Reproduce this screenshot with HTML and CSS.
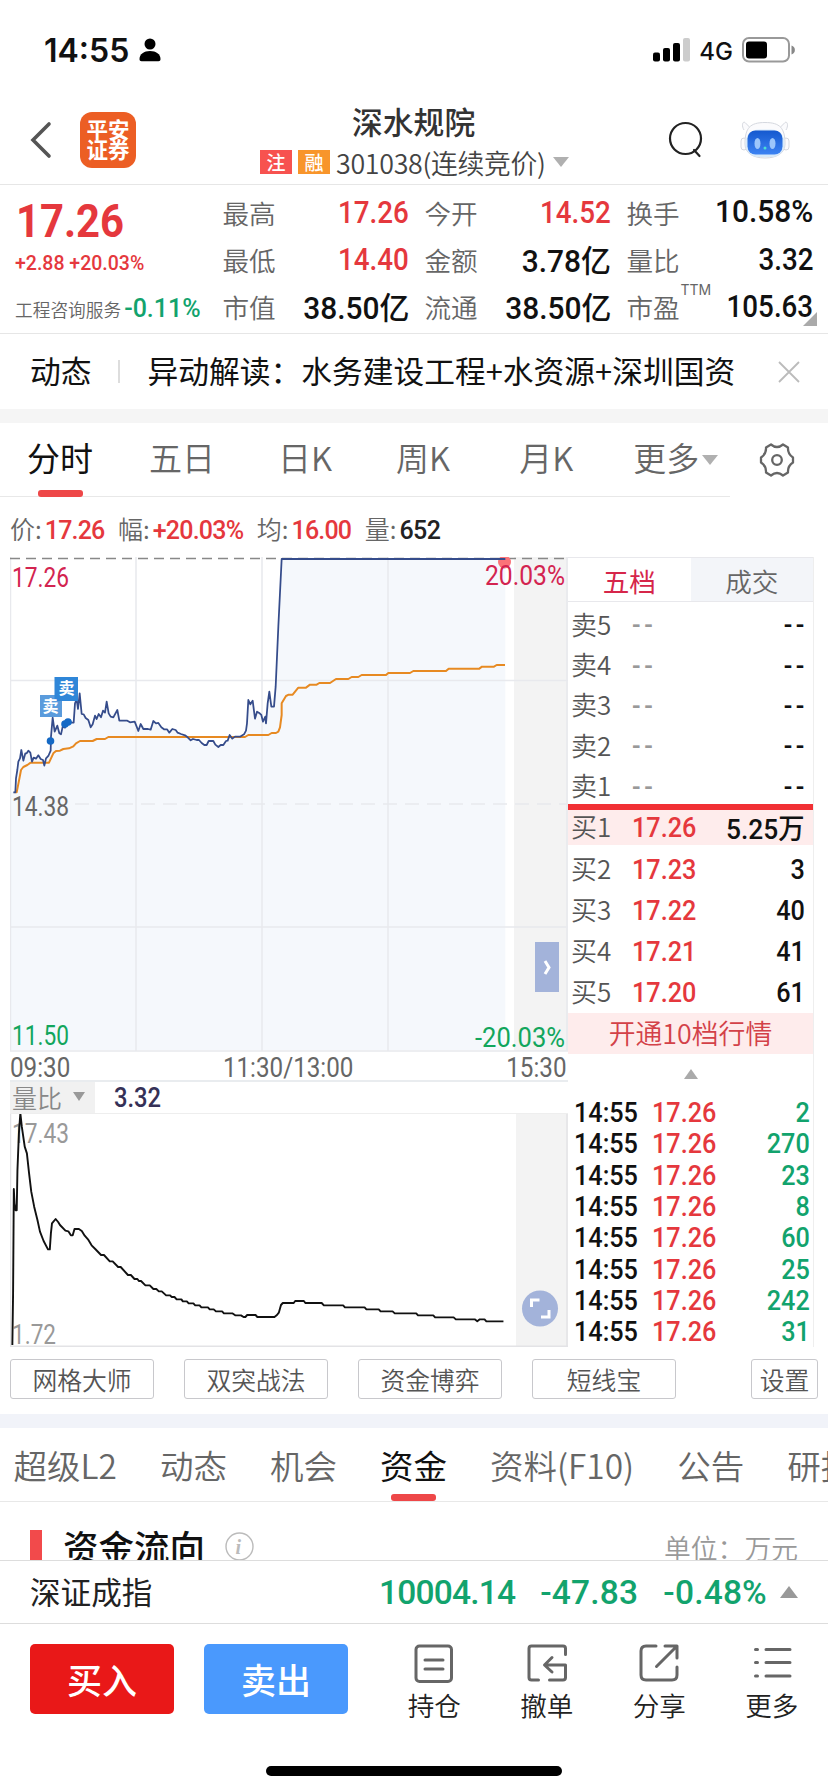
FILE: index.html
```html
<!DOCTYPE html>
<html lang="zh-CN">
<head>
<meta charset="utf-8">
<title>深水规院 301038</title>
<link rel="stylesheet" href="styles.css">
</head>
<body>
<div class="status">
  <span class="clock">14:55</span>
  <svg class="person" width="22" height="24" viewBox="0 0 22 24"><circle cx="11" cy="6" r="5.5"/><path d="M.5 21C.5 16 5 13 11 13s10.500 3 10.500 8c0 1.500-.8 2.200-2 2.200h-17c-1.200 0-2-.7-2-2.200z"/></svg>
  <svg class="signal" width="37" height="24" viewBox="0 0 37 24"><rect y="14.500" width="7" height="9" rx="2"/><rect x="10" y="10" width="7" height="13.500" rx="2"/><rect x="20" y="5" width="7" height="18.500" rx="2"/><rect x="30" width="7" height="23.500" rx="2" fill="#ccc"/></svg>
  <span class="net">4G</span>
  <svg class="battery" width="54" height="26" viewBox="0 0 54 26"><rect x="1" y="1" width="46" height="23.500" rx="6" fill="none" stroke="#999" stroke-width="2"/><rect x="4" y="4.500" width="21" height="17" rx="3"/><path d="M49.500 8.500c4.500 1.500 4.500 7.500 0 9z" fill="#888"/></svg>
</div>

<header class="header">
  <svg class="back" width="22" height="38" viewBox="0 0 22 38"><path d="M19 3 3 19l16 16" fill="none" stroke="#555" stroke-width="3.600" stroke-linecap="round"/></svg>
  <div class="logo"><span>平安</span><span>证券</span></div>
  <div class="title">
    <h1>深水规院</h1>
    <div class="code"><b class="tag red-tag">注</b><b class="tag orange-tag">融</b><span class="code-text">301038(连续竞价)</span><i class="tri-down"></i></div>
  </div>
  <svg class="search" width="36" height="38" viewBox="0 0 36 38"><g fill="none" stroke="#222" stroke-width="2.200" stroke-linecap="round"><circle cx="17.500" cy="17.500" r="15.500"/><path d="m26 29 5.500 6"/></g></svg>
  <svg class="robot" width="50" height="40" viewBox="0 0 50 40">
    <defs><linearGradient id="face" x2="0" y2="1"><stop stop-color="#1559cf"/><stop offset="1" stop-color="#3d83f2"/></linearGradient></defs>
    <g fill="#fbfbfd" stroke="#d5d8df"><path d="M4 10C1 5 3 1 5 2.500l5 5M46 10c3-5 1-9-1-7.500l-5 5"/><rect x="1" y="18" width="6" height="12" rx="3"/><rect x="43" y="18" width="6" height="12" rx="3"/><path d="M5 24C5 8 10 2.500 25 2.500S45 8 45 24c0 9-8 14-20 14S5 33 5 24z"/></g>
    <rect x="5.500" y="9.500" width="39" height="27.500" rx="13" fill="#d8eafa"/><rect x="7.500" y="10.500" width="35" height="24" rx="8" fill="url(#face)"/>
    <g fill="#9cc6fb"><ellipse cx="17.500" cy="23.500" rx="3" ry="5.500"/><ellipse cx="32.500" cy="23.500" rx="3" ry="5.500"/><circle cx="25" cy="28" r="1.500" fill="#4be0d0"/></g>
  </svg>
</header>

<section class="quote">
  <div class="last">
    <span class="num price">17.26</span>
    <span class="num change">+2.88 +20.03%</span>
    <span class="sector">工程咨询服务<b class="num">-0.11%</b></span>
  </div>
  <dl class="stats">
    <div><dt>最高</dt><dd class="num up">17.26</dd></div>
    <div><dt>今开</dt><dd class="num up">14.52</dd></div>
    <div><dt>换手</dt><dd class="num wide">10.58%</dd></div>
    <div><dt>最低</dt><dd class="num up">14.40</dd></div>
    <div><dt>金额</dt><dd class="num wide">3.78亿</dd></div>
    <div><dt>量比</dt><dd class="num">3.32</dd></div>
    <div><dt>市值</dt><dd class="num wide">38.50亿</dd></div>
    <div><dt>流通</dt><dd class="num wide">38.50亿</dd></div>
    <div><dt>市盈<sup>TTM</sup></dt><dd class="num">105.63</dd></div>
  </dl>
  <i class="corner"></i>
</section>

<section class="news">
  <span>动态</span><i class="bar"></i><span class="headline">异动解读：水务建设工程+水资源+深圳国资</span>
  <svg width="22" height="22" viewBox="0 0 22 22"><path d="m1 1 20 20M21 1 1 21" stroke="#bbb" stroke-width="1.800"/></svg>
</section>

<nav class="periods">
  <span class="tab on">分时</span><span class="tab">五日</span><span class="tab">日K</span><span class="tab">周K</span><span class="tab">月K</span><span class="tab">更多<i class="tri-down"></i></span>
  <svg class="gear" width="36" height="36" viewBox="0 0 36 36"><g fill="none" stroke="#666" stroke-width="2.300" stroke-linejoin="round"><path d="M12 2.500Q18 7.500 24 2.500L29 5.500Q28.500 12 34 15.500V20.500Q28.500 24 29 30.500L24 33.500Q18 28.500 12 33.500L7 30.500Q7.500 24 2 20.500V15.500Q7.500 12 7 5.500Z"/><circle cx="18" cy="18" r="4.800"/></g></svg>
</nav>

<div class="readout">
  <span>价:<b class="num up">17.26</b></span><span>幅:<b class="num up">+20.03%</b></span><span>均:<b class="num up">16.00</b></span><span>量:<b class="num">652</b></span>
</div>

<main class="market">
  <div class="charts">
    <svg class="main-chart" width="558" height="495" viewBox="10 557 558 495">
      <rect x="514" y="557" width="54" height="494" fill="#f3f3f3"/>
      <g transform="translate(0 540) scale(.33333)">
        <path fill="#f5f8fc" d="M44 757 50 690 60 650 64 625 70 665 76 638 85 632 96 668 105 650 115 650 133 675 140 650 152 630 158 530 165 575 172 558 182 583 190 555 200 560 208 540 220 548 230 480 234 505 239 460 245 522 265 540 272 562 285 528 300 525 315 515 320 485 328 530 352 510 358 542 405 548 415 573 425 552 445 570 460 543 490 568 520 568 560 592 600 600 620 617 640 603 655 620 680 605 690 587 705 592 730 583 740 565 747 480 758 485 765 525 780 515 797 545 807 455 815 500 825 440 845 57 1516 57 1516 1530 30 1530 30 757z"/>
      </g>
      <g stroke="#e8e9ed" fill="none" stroke-width="1.500"><path d="M10.500 557v494M136 557v494M262 557v494M388 557v494M10 680.500h558M10 927h558M10 1051h558M567 557v494" /><path d="M75 804h493" stroke-dasharray="14 8"/></g>
      <path d="M10 558.500h558" stroke="#888" stroke-width="1.300" stroke-dasharray="10 6"/>
      <circle cx="504.500" cy="562" r="6.500" fill="#fb7378"/>
      <g transform="translate(0 540) scale(.33333)" fill="none" stroke-linejoin="round">
        <path stroke="#e78a22" stroke-width="6" d="M44 757H50L57 722 63 690 70 681 82 675 92 668H147L160 640 168 633 180 632 190 627 207 625 220 619 228 610 240 603H278L290 597H315L325 591H735L745 585H805L815 579H828L835 575 840 562 845 525V490L858 468 866 464H878L895 443H918L930 434H950L958 429H990L1008 417H1045L1055 411H1075L1085 405H1158L1165 399H1230L1240 393H1338L1346 386H1438L1446 380H1482L1490 375H1515"/>
        <path stroke="#354c8b" stroke-width="5.300" d="M40 757H46L48 715 52 690 55 665 60 655 64 630 70 662 76 640 80 640 85 632 91 638 96 665 101 653 108 656 115 646 122 657 129 660 133 677 138 655 145 648 152 632 153 590 158 533 164 575 172 557 178 580 183 583 188 560 195 563 202 545 208 540 214 548 221 548 225 490 230 478 234 507 239 460 245 522 251 523 257 534 265 540 272 562 278 553 285 527 290 537 296 522 303 532 309 512 315 518 320 485 326 520 332 530 340 532 352 510 358 542H382L390 547 404 545 410 560 415 573 422 552 430 567H444L452 569 460 543 468 550 475 549 484 562 492 568H501L508 578 517 567 527 570 533 578 543 582 555 586 563 592 572 601 579 597 590 600H597L605 609 613 615H620L626 603H640L646 614 655 621 662 615 670 615 678 603 683 602 689 585 697 596 705 590H720L732 583 738 572 741 550 745 480 751 493 758 482 765 536 771 515 779 520 784 525 789 545 796 530 798 550 803 490 808 455 814 500H822L827 440 835 260 845 57H1516"/>
      </g>
      <circle cx="50.500" cy="741" r="3.800" fill="#1469c5"/><circle cx="65" cy="724" r="3.800" fill="#1469c5"/><circle cx="68" cy="722" r="3.800" fill="#1469c5"/>
      <rect x="40" y="695" width="22" height="22" fill="#5a9bdc"/><rect x="54.500" y="677" width="23.500" height="24" fill="#2f86d8"/>
      <g class="marker"><text x="42.500" y="712">卖</text><text x="58.500" y="694">卖</text></g>
      <g class="axis">
        <text x="12" y="587" textLength="57" lengthAdjust="spacingAndGlyphs" class="crimson">17.26</text>
        <text x="485" y="585" textLength="80" lengthAdjust="spacingAndGlyphs" class="crimson">20.03%</text>
        <text x="12" y="816" textLength="57" lengthAdjust="spacingAndGlyphs" class="gray">14.38</text>
        <text x="12" y="1044.500" textLength="57" lengthAdjust="spacingAndGlyphs" class="green">11.50</text>
        <text x="475" y="1046.500" textLength="90" lengthAdjust="spacingAndGlyphs" class="green">-20.03%</text>
      </g>
      <rect x="535" y="942" width="24" height="50" fill="#a3b3da"/><path d="m545 961 4 6.500-4 6.500" fill="none" stroke="#fff" stroke-width="3"/>
    </svg>
    <div class="times num"><span>09:30</span><span>11:30/13:00</span><span>15:30</span></div>
    <div class="indicator"><span class="select">量比<i class="tri-down"></i></span><b class="num">3.32</b></div>
    <svg class="sub-chart" width="558" height="233" viewBox="10 1114 558 233">
      <rect x="516" y="1114" width="52" height="232" fill="#f3f3f3"/>
      <path d="M10.500 1114v232M10 1346.300h558M567 1114v232" stroke="#e3e3e6" stroke-width="1.500"/>
      <g class="axis light"><text x="12" y="1143" textLength="57" lengthAdjust="spacingAndGlyphs">17.43</text><text x="12" y="1344" textLength="44" lengthAdjust="spacingAndGlyphs">1.72</text></g>
      <path transform="translate(0 1010) scale(.3635 .33333)" vector-effect="non-scaling-stroke" fill="none" stroke="#111" stroke-width="1.900" stroke-linejoin="round" d="M34 1005 36 850 38 537 40 580 43 601 46 601 48 480 52 370 56 310 60 350 68 410 74 430 80 490 86 545 94 590 103 630 110 665 120 693 132 718H137L140 670 143 640 153 627 160 636 165 645 180 662 188 664 195 676H200L205 657H217L225 663 233 677 242 688 252 706 262 717 278 735H286L302 754H310L325 771H332L352 795H360L370 807H378L382 813H388L400 826H412L422 837H430L437 844H445L457 856H468L472 861H480L486 868H499L503 874H514L519 880H532L537 886H549L554 892H572L577 898H588L594 904H611L616 910H639L647 916H663L670 921H675L680 915H703L708 921H755L762 915 767 908 773 885 778 879H808L812 873H836L840 879H885L891 886H944L949 892H1003L1008 898H1042L1047 904H1080L1086 910H1145L1150 916H1192L1197 922H1248L1254 928H1306L1313 934 1320 928H1333L1338 934H1385"/>
      <circle cx="540" cy="1308.500" r="18" fill="#a3b3da"/><path d="M531.500 1307v-7h8M541 1317h8v-7" fill="none" stroke="#fff" stroke-width="3"/>
    </svg>
  </div>

  <aside class="book">
    <div class="book-tabs"><span class="on">五档</span><span>成交</span></div>
    <div class="level ask"><span>卖5</span><i>--</i><b>--</b></div>
    <div class="level ask"><span>卖4</span><i>--</i><b>--</b></div>
    <div class="level ask"><span>卖3</span><i>--</i><b>--</b></div>
    <div class="level ask"><span>卖2</span><i>--</i><b>--</b></div>
    <div class="level ask"><span>卖1</span><i>--</i><b>--</b></div>
    <div class="split"></div>
    <div class="level first"><span>买1</span><i>17.26</i><b>5.25万</b></div>
    <div class="level"><span>买2</span><i>17.23</i><b>3</b></div>
    <div class="level"><span>买3</span><i>17.22</i><b>40</b></div>
    <div class="level"><span>买4</span><i>17.21</i><b>41</b></div>
    <div class="level"><span>买5</span><i>17.20</i><b>61</b></div>
    <div class="promo">开通10档行情</div>
    <div class="fold"><i class="tri-up"></i></div>
    <div class="tick"><b>14:55</b><i>17.26</i><em>2</em></div>
    <div class="tick"><b>14:55</b><i>17.26</i><em>270</em></div>
    <div class="tick"><b>14:55</b><i>17.26</i><em>23</em></div>
    <div class="tick"><b>14:55</b><i>17.26</i><em>8</em></div>
    <div class="tick"><b>14:55</b><i>17.26</i><em>60</em></div>
    <div class="tick"><b>14:55</b><i>17.26</i><em>25</em></div>
    <div class="tick"><b>14:55</b><i>17.26</i><em>242</em></div>
    <div class="tick"><b>14:55</b><i>17.26</i><em>31</em></div>
  </aside>
</main>

<div class="tools"><span>网格大师</span><span>双突战法</span><span>资金博弈</span><span>短线宝</span><span class="setup">设置</span></div>

<nav class="sections"><span>超级L2</span><span>动态</span><span>机会</span><span class="on">资金</span><span>资料(F10)</span><span>公告</span><span>研报</span></nav>

<section class="flow">
  <i class="mark"></i><h2>资金流向</h2>
  <svg width="29" height="29" viewBox="0 0 29 29"><circle cx="14.500" cy="14.500" r="13.500" fill="none" stroke="#bbb" stroke-width="1.400"/><text x="10.500" y="22" class="info">i</text></svg>
  <span class="unit">单位：万元</span>
</section>

<div class="index"><span>深证成指</span><b class="num v1">10004.14</b><b class="num v2">-47.83</b><b class="num v3">-0.48%</b><i class="tri-up"></i></div>

<footer class="actions">
  <div class="action-row">
    <button class="buy">买入</button><button class="sell">卖出</button>
    <div class="act"><svg width="40" height="40" viewBox="0 0 40 40"><rect x="2" y="2" width="35.500" height="35.500" rx="3.500"/><path d="M11 16h18M11 25h18"/></svg><span>持仓</span></div>
    <div class="act"><svg width="40" height="40" viewBox="0 0 40 40"><path d="M38.500 10.500V4.500q0-2.500-2.500-2.500H4.500Q2 2 2 4.500v29Q2 36 4.500 36H11.500M22.500 36H36q2.500 0 2.500-2.500V21H18M25 13.500l-7.500 7.500 7.500 7"/></svg><span>撤单</span></div>
    <div class="act"><svg width="40" height="40" viewBox="0 0 40 40"><path d="M17 2H7Q2 2 2 7v24q0 5 5 5h26q5 0 5-5V23M26 2h12v12M37 3 17.500 22.500"/></svg><span>分享</span></div>
    <div class="act"><svg width="40" height="40" viewBox="0 0 40 40"><path d="M3.500 5.500h2M14 5.500h24M3.500 18.500h2M14 18.500h24M3.500 32h2M14 32h24"/></svg><span>更多</span></div>
  </div>
  <div class="home"></div>
</footer>
</body>
</html>
```
FILE: styles.css
```css
* { box-sizing: border-box; margin: 0; padding: 0; }
body { width: 828px; height: 1792px; overflow: hidden; background: #fff; color: #111; font-family: "Noto Sans CJK SC", sans-serif; display: flex; flex-direction: column; }
body > * { flex: none; }
i, em { font-style: normal; }
svg { display: block; flex: none; }
.num, .axis, .level i, .level b, .tick { font-family: Roboto, "Noto Sans CJK SC", sans-serif; font-weight: 500; }
.up { color: #e5383d; }
.tri-down { display: inline-block; border: 8px solid transparent; border-top: 10px solid #b0b0b0; border-bottom: 0; }
.tri-up { display: inline-block; border: 8px solid transparent; border-bottom: 11px solid #aaa; border-top: 0; }

.status { height: 80px; padding: 20px 32px 0 44px; display: flex; align-items: center; font-family: Inter, sans-serif; }
.clock { width: 95px; font-size: 32px; font-weight: 600; }
.person { margin-right: auto; }
.net { font-size: 24px; font-weight: 500; margin: 2px 9px 0 9px; }

.header { position: relative; height: 105px; border-bottom: 1px solid #e6e6e6; padding: 0 38px 0 31px; display: flex; align-items: center; }
.header > svg, .logo { margin-top: 15px; }
.header > .back { margin-left: -1px; }
.logo { margin-left: 28px; width: 56px; height: 56px; border-radius: 12px; background: #ec5e24; color: #fff; font-size: 21.500px; font-weight: 700; line-height: 20px; display: flex; flex-direction: column; align-items: center; justify-content: center; padding-bottom: 2px; }
.title { flex: 1; padding-left: 124px; margin-top: 12px; }
h1 { font-size: 30.800px; font-weight: 500; line-height: 36px; padding-left: 92px; color: #333; margin-top: 4px; }
.code { display: flex; align-items: center; height: 30px; margin-top: 8px; font-size: 26.800px; color: #444; font-weight: 350; }
.tag { width: 32px; height: 24px; margin-right: 6px; color: #fff; font-size: 19px; font-weight: 500; line-height: 24px; text-align: center; }
.red-tag { background: #f7524f; }
.orange-tag { background: #f8952b; }
.code-text { width: 217px; white-space: nowrap; letter-spacing: -.3px; }
.search { margin-right: 36px; }

.quote { position: relative; height: 149px; border-bottom: 1px solid #e6e6e6; display: flex; padding: 4px 15px 0 15px; }
.last { width: 207.500px; flex: none; display: flex; flex-direction: column; white-space: nowrap; padding-top: 1px; }
.last .price { font-size: 47px; font-weight: 700; line-height: 62px; color: #e5383d; transform: scaleX(.89); transform-origin: left; padding-left: 1px; }
.last .change { font-size: 19.500px; line-height: 24px; color: #e5383d; }
.sector { margin-top: 16px; font-size: 17.700px; line-height: 34px; color: #666; font-weight: 350; display: flex; align-items: center; gap: 3px; }
.sector .num { font-size: 25px; color: #12a36d; }
.stats { flex: 1; display: grid; grid-template-columns: repeat(3, 186.500px); column-gap: 15.500px; grid-auto-rows: 47px; }
.stats > div { display: flex; justify-content: space-between; align-items: center; white-space: nowrap; }
.stats dt { font-size: 26.600px; color: #666; font-weight: 350; position: relative; }
.stats dd { font-size: 30.500px; transform: scaleX(.91); transform-origin: right; }
.stats .wide { transform: scaleX(.98); margin-top: -2px; }
.stats sup { position: absolute; left: 54px; top: -6px; font: 14px Inter, sans-serif; }
.corner { position: absolute; right: 11px; bottom: 7px; border: 7px solid #aaa; border-left-color: transparent; border-top-color: transparent; }

.news { height: 89px; border-bottom: 14px solid #f5f5f5; padding: 0 28px 0 30px; display: flex; align-items: center; font-size: 30.750px; white-space: nowrap; }
.news span { position: relative; top: -2px; }
.news .bar { width: 2px; height: 23px; background: #ddd; margin: 0 28px 0 26px; }
.headline { flex: 1; }

.periods { height: 74px; padding: 0 33px 0 27px; display: flex; align-items: center; font-size: 33px; color: #666; font-weight: 350; background: linear-gradient(#e8e8e8, #e8e8e8) 0 100% / 730px 1px no-repeat; white-space: nowrap; }
.tab { position: relative; height: 74px; line-height: 69px; margin-right: 56px; }
.tab:nth-child(2) { margin-right: 63px; }
.tab:nth-child(3) { margin-right: 64px; }
.tab:nth-child(4) { margin-right: 69px; }
.tab:nth-child(5) { margin-right: 60px; }
.tab:nth-child(6) { margin-right: 0; }
.tab.on, .sections .on { color: #111; font-weight: 400; }
.tab.on::after, .sections .on::after { content: ""; position: absolute; left: 11px; bottom: 0; width: 45px; height: 7px; border-radius: 3px; background: #ee4748; }
.tab .tri-down { margin-left: 3px; vertical-align: 6px; }
.gear { margin-left: auto; }

.readout { height: 60px; padding: 1px 0 0 10px; display: flex; align-items: center; gap: 13.500px; font-size: 25px; font-weight: 350; color: #666; white-space: nowrap; }
.readout .num { font-size: 25px; margin-left: 3px; letter-spacing: -.8px; }
.readout .num:not(.up) { color: #222; letter-spacing: -.6px; }

.market { height: 790px; padding-left: 10px; display: flex; }
.charts { width: 558px; display: flex; flex-direction: column; }
.axis { font-size: 27.500px; font-weight: 400; }
.crimson { fill: #d32450; }
.gray { fill: #666; }
.green { fill: #12a65c; }
.light { fill: #999; }
.marker { fill: #fff; font-size: 16px; font-weight: 700; }
.times { height: 30px; display: flex; justify-content: space-between; align-items: center; font-size: 27.500px; color: #666; font-weight: 400; border-bottom: 2px solid #e9ecef; padding: 3px 2px 0 0; }
.times span { transform: scaleX(.88); }
.times span:first-child { transform-origin: left; }
.times span:last-child { transform-origin: right; }
.indicator { height: 32px; display: flex; align-items: center; border-bottom: 1px solid #eee; }
.select { width: 85px; height: 31px; background: #f1f1f1; display: flex; align-items: center; gap: 11px; padding: 0 0 2px 2px; font-size: 25px; color: #888; font-weight: 350; line-height: 26px; }
.select .tri-down { border-width: 9px 6px 0; border-top-color: #999; }
.indicator .num { margin-left: 19px; font-size: 27px; color: #363157; transform: scaleX(.88); transform-origin: left; }

.book { width: 246px; border-right: 1px solid #eee; }
.book-tabs { height: 45px; display: flex; border: solid #e8e8ec; border-width: 1px 0; font-size: 26.600px; line-height: 45px; text-align: center; color: #666; font-weight: 350; }
.book-tabs span { flex: 1; background: #f3f5f9; }
.book-tabs .on { background: #fff; color: #d6264a; font-weight: 400; }
.level { height: 40.900px; display: flex; align-items: center; padding: 0 8px 0 3px; font-size: 28px; }
.ask { height: 40.400px; padding-top: 5px; }
.level span { width: 61px; font-size: 26px; line-height: 34px; font-weight: 350; color: #555; margin-top: -2px; }
.level i { color: #e5383d; flex: 1; transform: scaleX(.9); transform-origin: left; }
.level b { transform: scaleX(.9); transform-origin: right; }
.first b { transform: scaleX(.94); }
.ask i { color: #999; }
.ask i, .ask b { letter-spacing: 4px; }
.ask b { margin-right: -3px; }
.split { height: 6px; width: 245px; background: #f13034; }
.first { height: 35px; background: #feecec; margin-bottom: 4px; }
.promo { height: 41px; background: #feecec; color: #d34148; font-size: 26.800px; font-weight: 350; line-height: 39px; text-align: center; }
.fold { height: 43px; display: flex; justify-content: center; padding-top: 15px; }
.fold .tri-up { height: 10px; border-width: 0 7px 10px; }
.tick { height: 31.400px; display: flex; align-items: center; font-size: 28px; padding: 0 3px 0 6px; }
.tick b { width: 78px; font-weight: 500; transform: scaleX(.9); transform-origin: left; }
.tick i { flex: 1; color: #e5383d; transform: scaleX(.9); transform-origin: left; }
.tick em { color: #12a36d; transform: scaleX(.9); transform-origin: right; }

.tools { height: 81px; border-bottom: 14px solid #f1f3f9; padding: 12px 10px 0; display: flex; gap: 30px; font-size: 24.800px; font-weight: 350; color: #555; }
.tools span { width: 144px; height: 40px; border: 1px solid #c8c8cc; border-radius: 3px; line-height: 38px; text-align: center; }
.tools .setup { width: 67px; margin-left: auto; }

.sections { height: 74px; padding-left: 13.500px; border-bottom: 1px solid #e8e8e8; display: flex; gap: 43px; font-size: 33.500px; line-height: 73px; font-weight: 350; color: #666; white-space: nowrap; overflow: hidden; }
.sections .on { position: relative; }

.flow { height: 58px; overflow: hidden; padding: 28px 30px 0 30px; display: flex; align-items: flex-start; }
.mark { width: 12px; height: 42px; background: #f24a4b; margin-right: 21px; }
h2 { font-size: 35.500px; line-height: 42px; font-weight: 500; margin: -5px 20px 0 0; flex: none; }
.flow svg { margin-top: 2px; }
.info { font: italic bold 20px "Liberation Serif", serif; fill: #bbb; }
.unit { margin-left: auto; font-size: 26.800px; line-height: 36px; color: #999; font-weight: 350; }

.index { height: 64px; border: solid #ddd; border-width: 1px 0; padding: 0 30px 0 30px; display: flex; align-items: center; font-size: 30.600px; color: #222; }
.index > span { margin-top: -2px; }
.index .num { font-size: 33.500px; color: #12a36d; margin-top: 1px; }
.index .v1 { margin-left: auto; letter-spacing: -.8px; }
.v2, .v3 { margin-left: 25px; letter-spacing: .2px; }
.index .tri-up { margin-left: 13px; border-width: 0 9px 12px; border-bottom-color: #999; }

.actions { flex: 1; padding: 20px 0 0 30px; display: flex; flex-direction: column; }
.action-row { height: 122px; display: flex; align-items: flex-start; }
.action-row button { width: 144px; height: 70px; margin-right: 30px; border: 0; border-radius: 5px; background: #e91818; color: #fff; font: 500 35px/70px "Noto Sans CJK SC", sans-serif; }
.action-row .sell { background: #4a99fd; }
.act { width: 112.500px; display: flex; flex-direction: column; align-items: center; font-size: 26.600px; line-height: 42px; color: #222; font-weight: 350; }
.act svg { fill: none; stroke: #666; stroke-width: 3; stroke-linecap: round; stroke-linejoin: round; }
.home { width: 296px; height: 10px; border-radius: 5px; background: #000; margin-left: 236px; }
```
